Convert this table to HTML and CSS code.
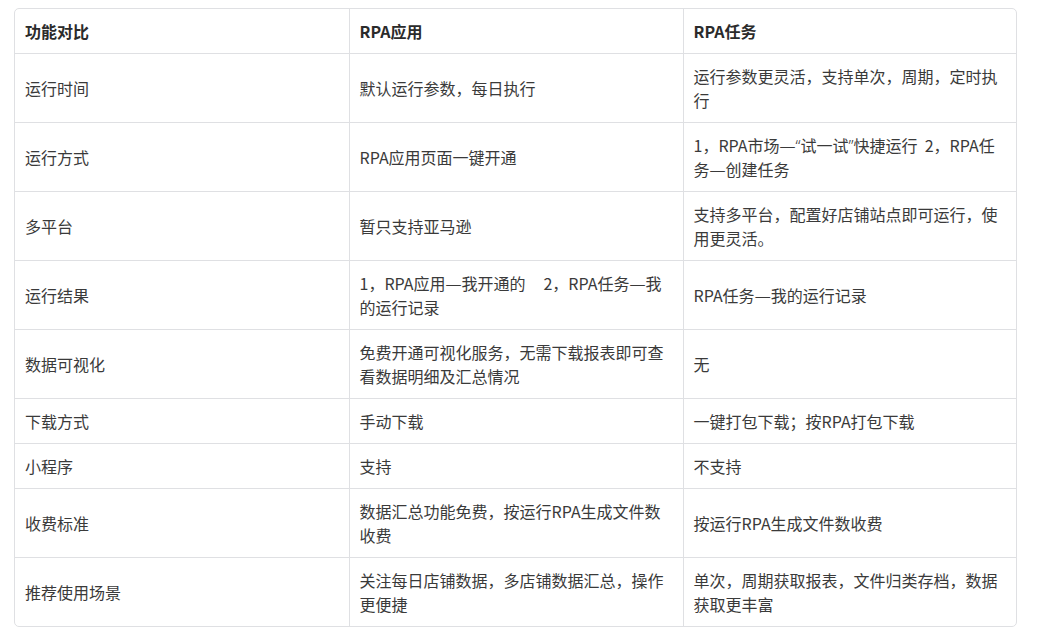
FILE: index.html
```html
<!DOCTYPE html>
<html lang="zh-CN">
<head>
<meta charset="utf-8">
<title>功能对比</title>
<link rel="stylesheet" href="styles.css">
</head>
<body>
<div class="wrap">
<table class="cmp">
<colgroup><col class="c1"><col class="c2"><col class="c3"></colgroup>
<thead>
<tr><th>功能对比</th><th>RPA应用</th><th>RPA任务</th></tr>
</thead>
<tbody>
<tr><td>运行时间</td><td>默认运行参数，每日执行</td><td>运行参数更灵活，支持单次，周期，定时执行</td></tr>
<tr><td>运行方式</td><td>RPA应用页面一键开通</td><td>1，RPA市场<span class="p">—“</span>试一试<span class="p">”</span>快捷运行&nbsp; 2，RPA任务<span class="p">—</span>创建任务</td></tr>
<tr><td>多平台</td><td>暂只支持亚马逊</td><td>支持多平台，配置好店铺站点即可运行，使用更灵活。</td></tr>
<tr><td>运行结果</td><td>1，RPA应用<span class="p">—</span>我开通的&nbsp;&nbsp;&nbsp;&nbsp; 2，RPA任务<span class="p">—</span>我的运行记录</td><td>RPA任务<span class="p">—</span>我的运行记录</td></tr>
<tr><td>数据可视化</td><td>免费开通可视化服务，无需下载报表即可查看数据明细及汇总情况</td><td>无</td></tr>
<tr><td>下载方式</td><td>手动下载</td><td>一键打包下载；按RPA打包下载</td></tr>
<tr><td>小程序</td><td>支持</td><td>不支持</td></tr>
<tr><td>收费标准</td><td>数据汇总功能免费，按运行RPA生成文件数收费</td><td>按运行RPA生成文件数收费</td></tr>
<tr><td>推荐使用场景</td><td>关注每日店铺数据，多店铺数据汇总，操作更便捷</td><td>单次，周期获取报表，文件归类存档，数据获取更丰富</td></tr>
</tbody>
</table>
</div>
</body>
</html>
```

FILE: styles.css
```css
html, body {
  margin: 0;
  padding: 0;
  background: #ffffff;
}
body {
  padding: 8px 0 0 14px;
  font-family: "Microsoft YaHei", "Noto Sans CJK SC", "Noto Sans", sans-serif;
  color: #3a3a3a;
}
.wrap {
  width: 1001px;
  border: 1px solid #dfe0e3;
  border-radius: 5px;
  overflow: hidden;
}
.cmp {
  width: 1001px;
  border-collapse: collapse;
  table-layout: fixed;
  font-size: 16px;
  line-height: 24px;
}
.c1 { width: 334px; }
.c2 { width: 334px; }
.c3 { width: 333px; }
.cmp th, .cmp td {
  padding: 10px 10px 10px 10px;
  text-align: left;
  vertical-align: middle;
  border: 1px solid #dfe0e3;
  word-break: break-all;
}
.cmp tr > :first-child { border-left: 0; }
.cmp tr > :last-child { border-right: 0; }
.cmp thead th { border-top: 0; font-weight: bold; color: #2b2b2b; }
.cmp tbody tr:last-child td { border-bottom: 0; }
.p {
  font-family: "Noto Sans", "DejaVu Sans", sans-serif;
  font-weight: 300;
  line-height: 1;
}
```
